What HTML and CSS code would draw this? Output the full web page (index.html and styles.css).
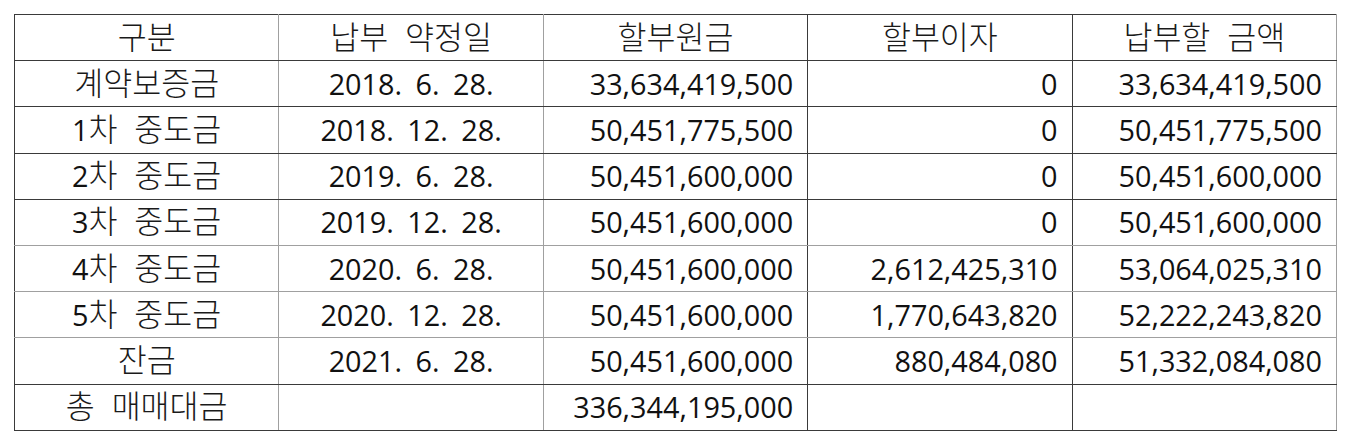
FILE: index.html
```html
<!DOCTYPE html>
<html lang="ko">
<head>
<meta charset="utf-8">
<link rel="stylesheet" href="styles.css">
</head>
<body>
<table class="sched">
  <thead>
    <tr><th><span class="k">구분</span></th><th><span class="k">납부 약정일</span></th><th><span class="k">할부원금</span></th><th><span class="k">할부이자</span></th><th><span class="k">납부할 금액</span></th></tr>
  </thead>
  <tbody>
    <tr><td class="c"><span class="k">계약보증금</span></td><td class="c d">2018. 6. 28.</td><td class="n">33,634,419,500</td><td class="n">0</td><td class="n">33,634,419,500</td></tr>
    <tr><td class="c">1<span class="k">차 중도금</span></td><td class="c d">2018. 12. 28.</td><td class="n">50,451,775,500</td><td class="n">0</td><td class="n">50,451,775,500</td></tr>
    <tr><td class="c">2<span class="k">차 중도금</span></td><td class="c d">2019. 6. 28.</td><td class="n">50,451,600,000</td><td class="n">0</td><td class="n">50,451,600,000</td></tr>
    <tr class="lite"><td class="c">3<span class="k">차 중도금</span></td><td class="c d">2019. 12. 28.</td><td class="n">50,451,600,000</td><td class="n">0</td><td class="n">50,451,600,000</td></tr>
    <tr class="lite"><td class="c">4<span class="k">차 중도금</span></td><td class="c d">2020. 6. 28.</td><td class="n">50,451,600,000</td><td class="n">2,612,425,310</td><td class="n">53,064,025,310</td></tr>
    <tr class="lite"><td class="c">5<span class="k">차 중도금</span></td><td class="c d">2020. 12. 28.</td><td class="n">50,451,600,000</td><td class="n">1,770,643,820</td><td class="n">52,222,243,820</td></tr>
    <tr><td class="c"><span class="k">잔금</span></td><td class="c d">2021. 6. 28.</td><td class="n">50,451,600,000</td><td class="n">880,484,080</td><td class="n">51,332,084,080</td></tr>
    <tr><td class="c"><span class="k">총 매매대금</span></td><td class="c"></td><td class="n">336,344,195,000</td><td class="n"></td><td class="n"></td></tr>
  </tbody>
</table>
</body>
</html>
```

FILE: styles.css
```css
html, body {
  margin: 0;
  padding: 0;
  background: #ffffff;
}

body {
  padding: 14px 0 0 14px;
}

.sched {
  border-collapse: collapse;
  table-layout: fixed;
  width: 1323px;
  font-family: "Open Sans", "Noto Sans CJK KR", sans-serif;
  font-size: 28.8px;
  color: #111111;
}

.sched th,
.sched td {
  border: 1px solid #3a3a3a;
  height: 46.2px;
  padding: 0 14px 0 14px;
  line-height: 44px;
  white-space: nowrap;
  box-sizing: border-box;
}

.sched th:nth-child(1),
.sched td:nth-child(1),
.sched th:nth-child(2),
.sched td:nth-child(2),
.sched th:nth-child(5),
.sched td:nth-child(5) {
  border-right-color: #a0a0a0;
}

.sched tr.lite td {
  border-bottom-color: #a0a0a0;
}

.sched th {
  font-weight: normal;
  text-align: center;
}

.sched td.c {
  text-align: center;
}

.sched td.n {
  text-align: right;
}

.sched .k {
  font-family: "Noto Sans CJK KR", sans-serif;
  font-size: 31.5px;
  line-height: 1.2;
  font-weight: 300;
  word-spacing: 8px;
  color: #1a1a1a;
}

.sched td.d {
  word-spacing: 6px;
}
```
